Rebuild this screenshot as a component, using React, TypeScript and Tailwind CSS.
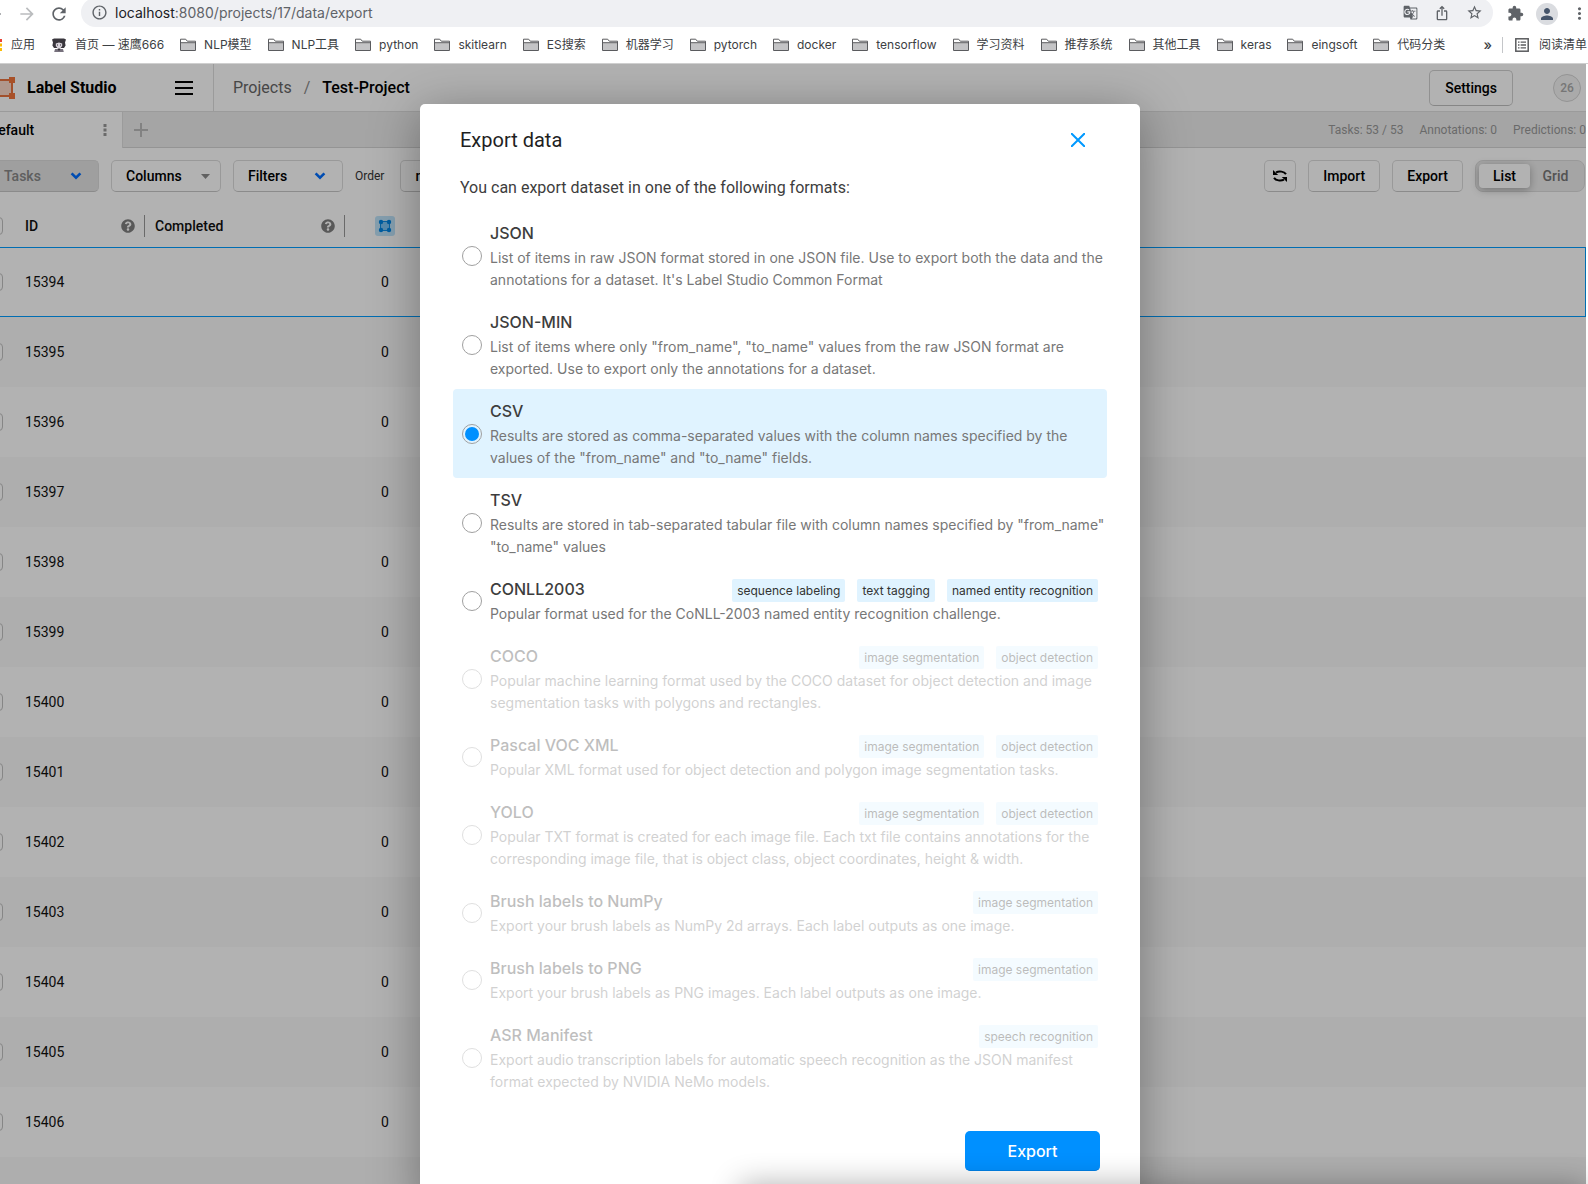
import { useState } from "react";
import type { ReactNode } from "react";
import {
  MdArrowBack,
  MdArrowForward,
  MdExtension,
  MdGTranslate,
  MdInfoOutline,
  MdIosShare,
  MdMoreVert,
  MdPerson,
  MdRefresh,
  MdStarBorder,
} from "react-icons/md";
import { FaQuestionCircle } from "react-icons/fa";

type ExportFormat = { name: string; title: string; description: string; tags?: string[]; disabled?: boolean };

const FORMATS: ExportFormat[] = [
  {
    name: "JSON",
    title: "JSON",
    description:
      "List of items in raw JSON format stored in one JSON file. Use to export both the data and the annotations for a dataset. It's Label Studio Common Format",
  },
  {
    name: "JSON_MIN",
    title: "JSON-MIN",
    description:
      'List of items where only "from_name", "to_name" values from the raw JSON format are exported. Use to export only the annotations for a dataset.',
  },
  {
    name: "CSV",
    title: "CSV",
    description:
      'Results are stored as comma-separated values with the column names specified by the values of the "from_name" and "to_name" fields.',
  },
  {
    name: "TSV",
    title: "TSV",
    description:
      'Results are stored in tab-separated tabular file with column names specified by "from_name" "to_name" values',
  },
  {
    name: "CONLL2003",
    title: "CONLL2003",
    description: "Popular format used for the CoNLL-2003 named entity recognition challenge.",
    tags: ["sequence labeling", "text tagging", "named entity recognition"],
  },
  {
    name: "COCO",
    title: "COCO",
    description:
      "Popular machine learning format used by the COCO dataset for object detection and image segmentation tasks with polygons and rectangles.",
    tags: ["image segmentation", "object detection"],
    disabled: true,
  },
  {
    name: "VOC",
    title: "Pascal VOC XML",
    description: "Popular XML format used for object detection and polygon image segmentation tasks.",
    tags: ["image segmentation", "object detection"],
    disabled: true,
  },
  {
    name: "YOLO",
    title: "YOLO",
    description:
      "Popular TXT format is created for each image file. Each txt file contains annotations for the corresponding image file, that is object class, object coordinates, height & width.",
    tags: ["image segmentation", "object detection"],
    disabled: true,
  },
  {
    name: "BRUSH_TO_NUMPY",
    title: "Brush labels to NumPy",
    description: "Export your brush labels as NumPy 2d arrays. Each label outputs as one image.",
    tags: ["image segmentation"],
    disabled: true,
  },
  {
    name: "BRUSH_TO_PNG",
    title: "Brush labels to PNG",
    description: "Export your brush labels as PNG images. Each label outputs as one image.",
    tags: ["image segmentation"],
    disabled: true,
  },
  {
    name: "ASR_MANIFEST",
    title: "ASR Manifest",
    description:
      "Export audio transcription labels for automatic speech recognition as the JSON manifest format expected by NVIDIA NeMo models.",
    tags: ["speech recognition"],
    disabled: true,
  },
];

const BOOKMARKS = [
  "NLP模型",
  "NLP工具",
  "python",
  "skitlearn",
  "ES搜索",
  "机器学习",
  "pytorch",
  "docker",
  "tensorflow",
  "学习资料",
  "推荐系统",
  "其他工具",
  "keras",
  "eingsoft",
  "代码分类",
];

const TASK_IDS = [15394, 15395, 15396, 15397, 15398, 15399, 15400, 15401, 15402, 15403, 15404, 15405, 15406];

function FolderIcon() {
  return (
    <svg width="16" height="14" viewBox="0 0 16 14" className="shrink-0">
      <path d="M.5 12.5V1.2h5.2l1.6 2h8.2v9.3z" fill="#fff" stroke="#5a5b5e" />
      <path d="M1 5h14v7H1z" fill="#c4c4c6" />
      <path d="M.5 4.7h15" stroke="#5a5b5e" />
    </svg>
  );
}

function AppsIcon() {
  return (
    <svg width="12" height="12" viewBox="0 0 12 12">
      <path d="M0 0h3v3H0zM0 4.5h3v3H0z" fill="#ea4335" />
      <path d="M4.5 0h3v3h-3zM9 0h3v3H9z" fill="#ea4335" />
      <path d="M4.5 4.5h3v3h-3zM0 9h3v3H0z" fill="#34a853" />
      <path d="M9 4.5h3v3H9zM9 9h3v3H9zM4.5 9h3v3h-3z" fill="#fbbc04" />
    </svg>
  );
}

function FaceIcon() {
  return (
    <svg width="14" height="14" viewBox="0 0 14 14">
      <path d="M0 1.5 2 .5h10l2 1-1 3 .6 3-1.6 2.6H2L.4 7.500 1 4.500z" fill="#39363d" />
      <path d="M3.800 5.500 7 4.500l3.200 1v2.600L8.600 10H5.400L3.800 8.100z" fill="#d9d4dc" />
      <path d="M5 6.500h1v1H5zM8 6.500h1v1H8z" fill="#2a272e" />
      <path d="M3 11h8l.8 3H2.200z" fill="#77717d" />
      <path d="M5.500 10.500h3L7 13z" fill="#2a272e" />
    </svg>
  );
}

function ReadingListIcon() {
  return (
    <svg width="14" height="14" viewBox="0 0 14 14" fill="none" stroke="#5a5b5e">
      <rect x=".8" y=".8" width="12.400" height="12.400" strokeWidth="1.500" />
      <path d="M3 4.200h1.500M3 7h1.500M3 9.800h1.500M5.600 4.200H11M5.600 7H11M5.600 9.800H11" strokeWidth="1.300" />
    </svg>
  );
}

function LogoIcon() {
  return (
    <svg width="25" height="22" viewBox="0 0 25 22">
      <path d="M3 3h19v16H3z" fill="#fbd9c9" stroke="#e9733f" strokeWidth="2" />
      <path d="M0 0h6v6H0zM19 0h6v6h-6zM0 16h6v6H0zM19 16h6v6h-6z" fill="#f1743c" />
    </svg>
  );
}

function ChevronIcon() {
  return (
    <svg width="12" height="8" viewBox="0 0 12 8" fill="none" stroke="#006eff" strokeWidth="2.600">
      <path d="M1.600 1.400 6 5.600l4.400-4.200" />
    </svg>
  );
}

function RefreshIcon() {
  return (
    <svg width="16" height="16" viewBox="0 0 16 16" fill="none" stroke="#000" strokeWidth="2">
      <path d="M4 4.400A7 5.400 0 0 1 14 6.200" />
      <path d="M12 11.600A7 5.400 0 0 1 2 9.800" />
      <path d="M1 2v5h5.200z" fill="#000" stroke="none" />
      <path d="M15 14V9H9.800z" fill="#000" stroke="none" />
    </svg>
  );
}

function RegionIcon() {
  return (
    <svg width="20" height="20" viewBox="0 0 20 20">
      <rect width="20" height="20" rx="3" fill="#bfe4fb" />
      <rect x="5.500" y="5.500" width="9" height="9" fill="#7ec8fa" stroke="#0f8fe8" />
      <circle cx="6" cy="6" r="2.200" fill="#0086e6" />
      <circle cx="14" cy="6" r="2.200" fill="#0086e6" />
      <circle cx="6" cy="14" r="2.200" fill="#0086e6" />
      <circle cx="14" cy="14" r="2.200" fill="#0086e6" />
    </svg>
  );
}

function ToolButton({ className = "", children }: { className?: string; children: ReactNode }) {
  return (
    <button
      className={`flex h-8 shrink-0 items-center rounded-[5px] border border-[#dcdcdc] border-b-[#c8c8c8] text-sm font-medium text-black ${className}`}
    >
      {children}
    </button>
  );
}

function BrowserBar() {
  return (
    <div className="shrink-0 border-b border-[#cfcfcf] bg-white font-[Inter,'Noto_Sans_CJK_SC',sans-serif] text-[#3c4043]">
      <div className="flex h-[27px] items-center overflow-hidden">
        <button aria-label="Back" className="-ml-4 text-[#5f6368]">
          <MdArrowBack size={20} />
        </button>
        <button aria-label="Forward" className="ml-[13px] text-[#babcbe]">
          <MdArrowForward size={20} />
        </button>
        <button aria-label="Reload" className="ml-3 text-[#5f6368]">
          <MdRefresh size={20} />
        </button>
        <div className="ml-3 flex h-[29px] flex-1 items-center self-end rounded-full bg-[#eff0f3] px-[10px] text-[#5f6368]">
          <MdInfoOutline size={17} />
          <div className="ml-[7px] flex-1 text-sm">
            <span className="text-[#202124]">localhost</span>:8080/projects/17/data/export
          </div>
          <div className="flex items-center gap-4">
            <MdGTranslate size={15} />
            <MdIosShare size={16} />
            <MdStarBorder size={17} />
          </div>
        </div>
        <div className="flex items-center pl-[14px] text-[#5f6368]">
          <MdExtension size={17} />
          <span className="ml-3 flex size-[22px] items-center justify-center rounded-full bg-[#dadce0] text-[#44546a]">
            <MdPerson size={18} />
          </span>
          <button aria-label="Menu" className="-mr-[1px] ml-3">
            <MdMoreVert size={19} />
          </button>
        </div>
      </div>
      <nav className="flex h-9 items-center overflow-hidden whitespace-nowrap pr-[1px] text-xs">
        <a href="#apps" className="-ml-[10px] flex items-center gap-[9px]">
          <AppsIcon />
          应用
        </a>
        <a href="#home" className="ml-[17px] flex items-center gap-[9px]">
          <FaceIcon />
          首页 — 速鹰666
        </a>
        {BOOKMARKS.map((name) => (
          <a key={name} href={`#${name}`} className="ml-4 flex items-center gap-2">
            <FolderIcon />
            {name}
          </a>
        ))}
        <button aria-label="More bookmarks" className="ml-auto text-sm font-medium leading-4">
          »
        </button>
        <a href="#reading" className="ml-[10px] flex items-center gap-[10px] border-l border-[#c4c6c9] pl-3">
          <ReadingListIcon />
          阅读清单
        </a>
      </nav>
    </div>
  );
}

function AppHeader() {
  return (
    <header className="flex h-12 shrink-0 items-stretch border-b border-[#dedede]">
      <div className="flex w-[240px] items-center border-r border-[#dedede] pl-4 pr-5">
        <LogoIcon />
        <span className="ml-3 text-base font-bold">Label Studio</span>
        <button aria-label="Main menu" className="ml-auto flex flex-col gap-1">
          <span className="h-[2px] w-[18px] bg-black" />
          <span className="h-[2px] w-[18px] bg-black" />
          <span className="h-[2px] w-[18px] bg-black" />
        </button>
      </div>
      <div className="ml-[19px] flex items-center gap-3 text-base">
        <a href="#projects" className="text-[#666]">
          Projects
        </a>
        <span className="text-[#888]">/</span>
        <span className="font-medium text-black">Test-Project</span>
      </div>
      <div className="ml-auto flex items-center gap-10 pr-[5px]">
        <button className="h-9 rounded-[5px] border border-[#d0d0d0] border-b-[#c0c0c0] px-[15px] text-sm font-medium">
          Settings
        </button>
        <span className="flex size-7 items-center justify-center rounded-full border border-[#d4d4d4] bg-[#f4f4f4] text-xs font-medium text-[#aaa]">
          26
        </span>
      </div>
    </header>
  );
}

function TabsBar() {
  return (
    <div className="flex h-9 shrink-0 bg-[#ededed]">
      <div className="flex w-[149px] items-center border-r border-[#dedede] bg-white px-[15px] text-sm font-medium">
        Default
        <svg width="4" height="12" viewBox="0 0 4 12" fill="#999" className="ml-auto">
          <path d="M.5 0h3v3h-3zM.5 4.500h3v3h-3zM.5 9h3v3h-3z" />
        </svg>
      </div>
      <div className="flex flex-1 items-center justify-between border-b border-[#d4d4d4] pl-[11px]">
        <button aria-label="Add tab">
          <svg width="14" height="14" viewBox="0 0 14 14" stroke="#bbb" strokeWidth="2">
            <path d="M7 0v14M0 7h14" />
          </svg>
        </button>
        <div className="flex gap-4 text-xs text-[#999]">
          <span>Tasks: 53 / 53</span>
          <span>Annotations: 0</span>
          <span>Predictions: 0</span>
        </div>
      </div>
    </div>
  );
}

function Toolbar() {
  return (
    <div className="flex h-14 shrink-0 items-center gap-3 pr-[1px]">
      <ToolButton className="w-[125px] justify-between bg-[#e4e4e4] pl-[29px] pr-4">
        <span className="text-[#888]">Tasks</span>
        <ChevronIcon />
      </ToolButton>
      <ToolButton className="w-[110px] justify-between pl-[14px] pr-[10px]">
        Columns
        <svg width="9" height="5" viewBox="0 0 9 5" fill="#8c8c8c">
          <path d="M0 0h9L4.500 5z" />
        </svg>
      </ToolButton>
      <ToolButton className="w-[110px] justify-between pl-[14px] pr-4">
        Filters
        <ChevronIcon />
      </ToolButton>
      <span className="text-xs text-[#333]">Order</span>
      <ToolButton className="ml-1 w-[110px] pl-[14px]">not set</ToolButton>
      <div className="flex-1" />
      <ToolButton className="w-8 justify-center">
        <RefreshIcon />
      </ToolButton>
      <ToolButton className="px-[14px]">Import</ToolButton>
      <ToolButton className="px-[14px]">Export</ToolButton>
      <div className="flex h-8 items-center rounded-lg border border-[#dcdcdc] bg-[#ededed] p-[3px] text-sm font-medium">
        <button className="h-6 w-[51px] rounded bg-white shadow-[0_2px_8px_rgba(0,0,0,0.3)]">List</button>
        <button className="h-6 w-[51px] text-[#777]">Grid</button>
      </div>
    </div>
  );
}

function ColumnHead({ label }: { label: string }) {
  return (
    <div className="flex h-[22px] items-center justify-between border-r border-[#999] pr-[9px]">
      {label}
      <FaQuestionCircle size={14} color="#808080" />
    </div>
  );
}

function TaskTable() {
  return (
    <table className="w-full table-fixed border-collapse text-left text-sm text-[#111]">
      <colgroup>
        <col className="w-[51px]" />
        <col className="w-[120px]" />
        <col className="w-[200px]" />
        <col className="w-20" />
        <col />
      </colgroup>
      <thead>
        <tr className="h-[43px]">
          <th className="pl-[11px]">
            <input
              type="checkbox"
              aria-label="Select all"
              className="block size-[18px] appearance-none rounded border border-[#c0c0c0] bg-white"
            />
          </th>
          <th className="font-medium">
            <ColumnHead label="ID" />
          </th>
          <th className="pl-[10px] font-medium">
            <ColumnHead label="Completed" />
          </th>
          <th>
            <div className="flex justify-center">
              <RegionIcon />
            </div>
          </th>
          <th />
        </tr>
      </thead>
      <tbody>
        {TASK_IDS.map((id, i) => (
          <tr
            key={id}
            className={`h-[70px] ${i === 0 ? "shadow-[inset_0_0_0_1px_#009dff]" : ""} ${i % 2 ? "bg-[#f9f9f9]" : ""}`}
          >
            <td className="pl-[11px]">
              <input
                type="checkbox"
                aria-label={`Select task ${id}`}
                className="block size-[18px] appearance-none rounded border border-[#c0c0c0] bg-white"
              />
            </td>
            <td>{id}</td>
            <td />
            <td className="text-center">0</td>
            <td />
          </tr>
        ))}
        <tr className="h-[70px] bg-[#f9f9f9]">
          <td colSpan={5} />
        </tr>
      </tbody>
    </table>
  );
}

function FormatItem({
  format,
  checked,
  onSelect,
}: {
  format: ExportFormat;
  checked: boolean;
  onSelect: () => void;
}) {
  return (
    <label
      className={`flex items-center gap-2 rounded px-[9px] pb-[9px] pt-[10px] ${checked ? "bg-[#e0f3ff]" : ""} ${
        format.disabled ? "opacity-33" : "cursor-pointer"
      }`}
    >
      <input
        type="radio"
        name="format"
        value={format.name}
        checked={checked}
        disabled={format.disabled}
        onChange={onSelect}
        className="size-5 shrink-0 appearance-none rounded-full border border-[#a0a0a0] bg-white bg-clip-content p-[2px] checked:bg-[#0090ff]"
      />
      <span className="flex-1">
        <span className="flex h-[26px] items-start justify-between text-base font-medium leading-6 text-[#3d3d3d]">
          {format.title}
          {format.tags && (
            <span className="flex gap-3 pt-[2px] text-xs font-normal text-[#333]">
              {format.tags.map((tag) => (
                <span key={tag} className="rounded-[2px] bg-[#e0f3ff] px-[5px] leading-[23px]">
                  {tag}
                </span>
              ))}
            </span>
          )}
        </span>
        <span className="-mr-4 block text-sm leading-[22px] text-[#777]">{format.description}</span>
      </span>
    </label>
  );
}

function ExportModal() {
  const [selected, setSelected] = useState("CSV");

  return (
    <div className="absolute inset-0 flex items-start justify-center overflow-hidden bg-black/30 pt-10">
      <div
        role="dialog"
        aria-label="Export data"
        className="w-[720px] rounded-[5px] bg-white pb-10 pt-6 font-[Inter,sans-serif] shadow-[0_8px_50px_rgba(0,0,0,0.35)]"
      >
        <div className="flex items-center justify-between pl-10 pr-[55px]">
          <h2 className="font-[Roboto,sans-serif] text-xl leading-6 text-[#1f1f1f]">Export data</h2>
          <button aria-label="Close">
            <svg width="14" height="14" viewBox="0 0 14 14" stroke="#0099ff" strokeWidth="2">
              <path d="m0 0 14 14M14 0 0 14" />
            </svg>
          </button>
        </div>
        <p className="mt-6 px-10 font-[Roboto,sans-serif] text-base text-[#3d3d3d]">
          You can export dataset in one of the following formats:
        </p>
        <div className="mt-[11px] px-[33px]">
          {FORMATS.map((format) => (
            <FormatItem
              key={format.name}
              format={format}
              checked={format.name === selected}
              onSelect={() => setSelected(format.name)}
            />
          ))}
        </div>
        <div className="mt-[29px] flex justify-end px-10">
          <button className="h-10 w-[135px] rounded-[5px] border-b border-[#0080e6] bg-[#0090ff] text-base font-medium text-white">
            Export
          </button>
        </div>
      </div>
    </div>
  );
}

export default function App() {
  return (
    <div className="relative flex h-screen flex-col overflow-hidden bg-white">
      <BrowserBar />
      <div className="relative -ml-[26px] mr-[2px] flex min-h-0 flex-1 flex-col overflow-hidden bg-white font-[Roboto,sans-serif] text-black">
        <AppHeader />
        <TabsBar />
        <Toolbar />
        <TaskTable />
        <ExportModal />
      </div>
      {/* soft shadow rising from the bottom edge */}
      <div className="absolute left-[740px] right-0 top-full h-10 shadow-[0_0_30px_rgba(0,0,0,0.3)]" />
    </div>
  );
}
